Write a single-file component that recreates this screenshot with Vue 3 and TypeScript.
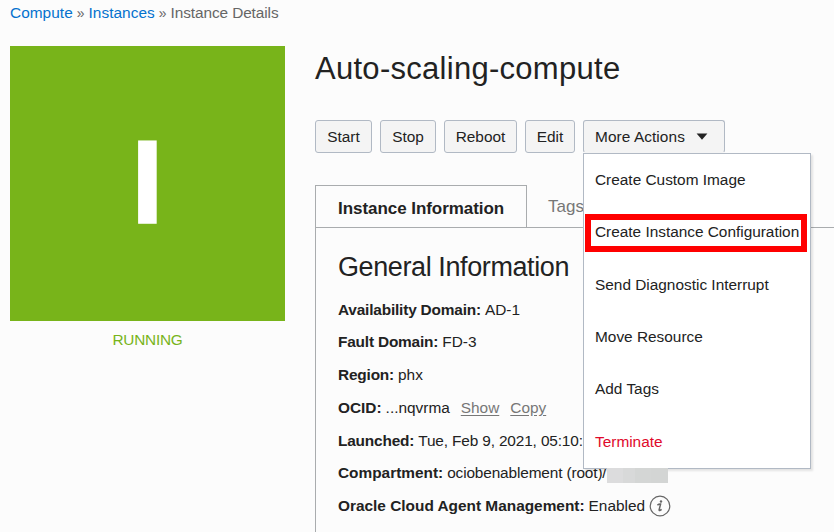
<script setup lang="ts">
interface Field {
  label: string
  value: string
  cls?: string
  kind?: 'ocid' | 'masked' | 'info'
}

const actions: string[] = ['Start', 'Stop', 'Reboot', 'Edit']

const menuItems: { text: string; cls?: string }[] = [
  { text: 'Create Custom Image' },
  { text: 'Create Instance Configuration', cls: 'highlighted' },
  { text: 'Send Diagnostic Interrupt' },
  { text: 'Move Resource', cls: 'move' },
  { text: 'Add Tags', cls: 'raised' },
  { text: 'Terminate', cls: 'danger' },
]

const fields: Field[] = [
  { label: 'Availability Domain:', value: 'AD-1', cls: 'tight' },
  { label: 'Fault Domain:', value: 'FD-3', cls: 'tight' },
  { label: 'Region:', value: 'phx', cls: 'tight' },
  { label: 'OCID:', value: '...nqvrma', kind: 'ocid' },
  { label: 'Launched:', value: 'Tue, Feb 9, 2021, 05:10:', cls: 'tight narrow launched' },
  { label: 'Compartment:', value: 'ociobenablement (root)/', cls: 'narrow', kind: 'masked' },
  { label: 'Oracle Cloud Agent Management:', value: 'Enabled', kind: 'info' },
]
</script>

<template>
  <div class="page">
    <nav class="crumbs">
      <a>Compute</a><span class="sep">»</span><a>Instances</a><span class="sep">»</span>
      <span class="current">Instance Details</span>
    </nav>
    <div class="body">
      <aside class="side">
        <div class="tile"><span class="letter">I</span></div>
        <div class="status">RUNNING</div>
      </aside>
      <main class="main">
        <h1>Auto-scaling-compute</h1>
        <div class="actions">
          <button v-for="a in actions" :key="a" type="button" class="btn" :class="a.toLowerCase()">{{ a }}</button>
          <div class="more">
            <button type="button" class="btn more-btn">
              <span>More Actions</span>
              <svg width="12" height="7" viewBox="0 0 12 7"><path d="M0.6 0.4H11.4L6 6.8Z" fill="#222" /></svg>
            </button>
            <ul class="menu">
              <li v-for="m in menuItems" :key="m.text" :class="m.cls"><span>{{ m.text }}</span></li>
            </ul>
          </div>
        </div>
        <div class="tabs">
          <div class="tab active">Instance Information</div>
          <div class="tab">Tags</div>
        </div>
        <section class="panel">
          <h2>General Information</h2>
          <div v-for="f in fields" :key="f.label" class="field" :class="f.cls">
            <b>{{ f.label }}</b>
            <span class="value">{{ f.value }}</span>
            <template v-if="f.kind === 'ocid'">
              <a class="link">Show</a>
              <a class="link">Copy</a>
            </template>
            <span v-if="f.kind === 'masked'" class="mask"></span>
            <svg v-if="f.kind === 'info'" class="info" width="22" height="22" viewBox="0 0 22 22">
              <circle cx="11" cy="11" r="9.8" fill="none" stroke="#666" stroke-width="1.2" />
              <circle cx="12" cy="6.5" r="1.2" fill="#666" />
              <path d="M8.4 10.2C9.5 9.3 10.8 8.8 11.6 9L10.1 14.8C9.9 16 11.4 15.4 12.6 14.4" fill="none" stroke="#666" stroke-width="1.5" />
            </svg>
          </div>
        </section>
      </main>
    </div>
  </div>
</template>

<style>
body {
  background: #fcfcfc;
  overflow: hidden;
}
</style>

<style scoped>
.page {
  width: 834px;
  height: 532px;
  overflow: hidden;
  background: #fcfcfc;
  color: #222;
  font-family: 'Liberation Sans', Arial, sans-serif;
  font-size: 15.4px;
}
.crumbs {
  display: flex;
  height: 46px;
  padding-left: 10px;
  box-sizing: border-box;
  line-height: 26px;
  color: #666;
  white-space: nowrap;
}
.crumbs a {
  color: #0572ce;
  letter-spacing: 0.04px;
}
.current {
  letter-spacing: -0.1px;
}
.sep {
  font-size: 14px;
  margin: 0 4px;
}
.body {
  display: flex;
}
.side {
  width: 275px;
  margin: 0 30px 0 10px;
  flex: none;
}
.tile {
  box-sizing: border-box;
  height: 274.6px;
  padding-bottom: 3px;
  background: #78b41a;
  display: flex;
  justify-content: center;
  align-items: center;
}
.letter {
  color: #fff;
  font-weight: bold;
  font-size: 118px;
  line-height: 136px;
  -webkit-text-stroke: 1.5px #fff;
}
.status {
  margin-top: 9px;
  line-height: 20px;
  text-align: center;
  letter-spacing: -0.25px;
  color: #78b41a;
}
.main {
  flex: 1;
  min-width: 0;
}
h1 {
  margin: 0;
  font-weight: 400;
  font-size: 31px;
  line-height: 46px;
  letter-spacing: 0.28px;
}
.actions {
  display: flex;
  gap: 8px;
  margin-top: 28px;
  height: 33px;
}
.btn {
  box-sizing: border-box;
  height: 33px;
  padding: 0;
  border: 1px solid #b1b9c4;
  border-radius: 3px;
  background: #f4f4f4;
  color: #222;
  font: inherit;
  white-space: nowrap;
}
.start {
  width: 57px;
}
.stop {
  width: 56px;
}
.reboot {
  width: 73px;
}
.edit {
  width: 50px;
}
.more {
  position: relative;
}
.more-btn {
  width: 142px;
  display: flex;
  align-items: center;
  justify-content: space-between;
  padding: 0 16px 0 11px;
  border-bottom-color: #f4f4f4;
  letter-spacing: 0.08px;
}
.menu {
  position: absolute;
  z-index: 2;
  left: 0;
  top: 33px;
  box-sizing: border-box;
  width: 228px;
  height: 316px;
  margin: 0;
  padding: 0 3px 0 1px;
  list-style: none;
  background: #fff;
  border: 1px solid #b1b9c4;
  box-shadow: 2px 2px 2px rgba(0, 0, 0, 0.1);
}
.menu li {
  box-sizing: border-box;
  height: 52.4px;
  padding-left: 10px;
  display: flex;
  align-items: center;
  white-space: nowrap;
}
.menu .highlighted {
  height: 38px;
  margin: 7.6px 0 7px;
  padding: 0 0 2px 4px;
  border: 6px solid #f00;
  letter-spacing: -0.01px;
}
.menu .move,
.menu .raised {
  padding-bottom: 2px;
}
.menu .danger {
  color: #e0092b;
}
.tabs {
  display: flex;
  height: 43px;
  margin-top: 32px;
  box-sizing: border-box;
  border-bottom: 1px solid #a9acae;
  font-size: 17px;
  color: #777;
}
.tab {
  line-height: 43px;
  padding-left: 21px;
}
.tab.active {
  box-sizing: border-box;
  width: 212px;
  height: 42px;
  padding-left: 22px;
  line-height: 45px;
  border: 1px solid #a9acae;
  border-bottom: 0;
  font-weight: bold;
  letter-spacing: -0.05px;
  color: #222;
  white-space: nowrap;
}
.panel {
  border-left: 1px solid #a9acae;
  padding: 23px 0 20px 22px;
}
h2 {
  margin: 0 0 10.4px;
  font-weight: 400;
  font-size: 27px;
  line-height: 32px;
  letter-spacing: -0.4px;
}
.field {
  display: flex;
  align-items: center;
  height: 32.7px;
  white-space: nowrap;
}
.tight b {
  letter-spacing: -0.18px;
}
.launched {
  box-sizing: border-box;
  padding-top: 1px;
}
.value {
  margin-left: 4px;
}
.narrow .value {
  letter-spacing: -0.14px;
}
.link {
  margin-left: 11px;
  color: #777;
  text-decoration: underline;
  text-underline-offset: 2px;
}
.mask {
  width: 61px;
  height: 15px;
  margin-top: 4px;
  position: relative;
  z-index: 3;
  background: linear-gradient(90deg, #dcdcdd 0 16px, #d8d9d9 16px 28px, #d4d6d5 28px 44px, #d3d5d4 44px);
}
.info {
  margin-left: 4px;
}
</style>
